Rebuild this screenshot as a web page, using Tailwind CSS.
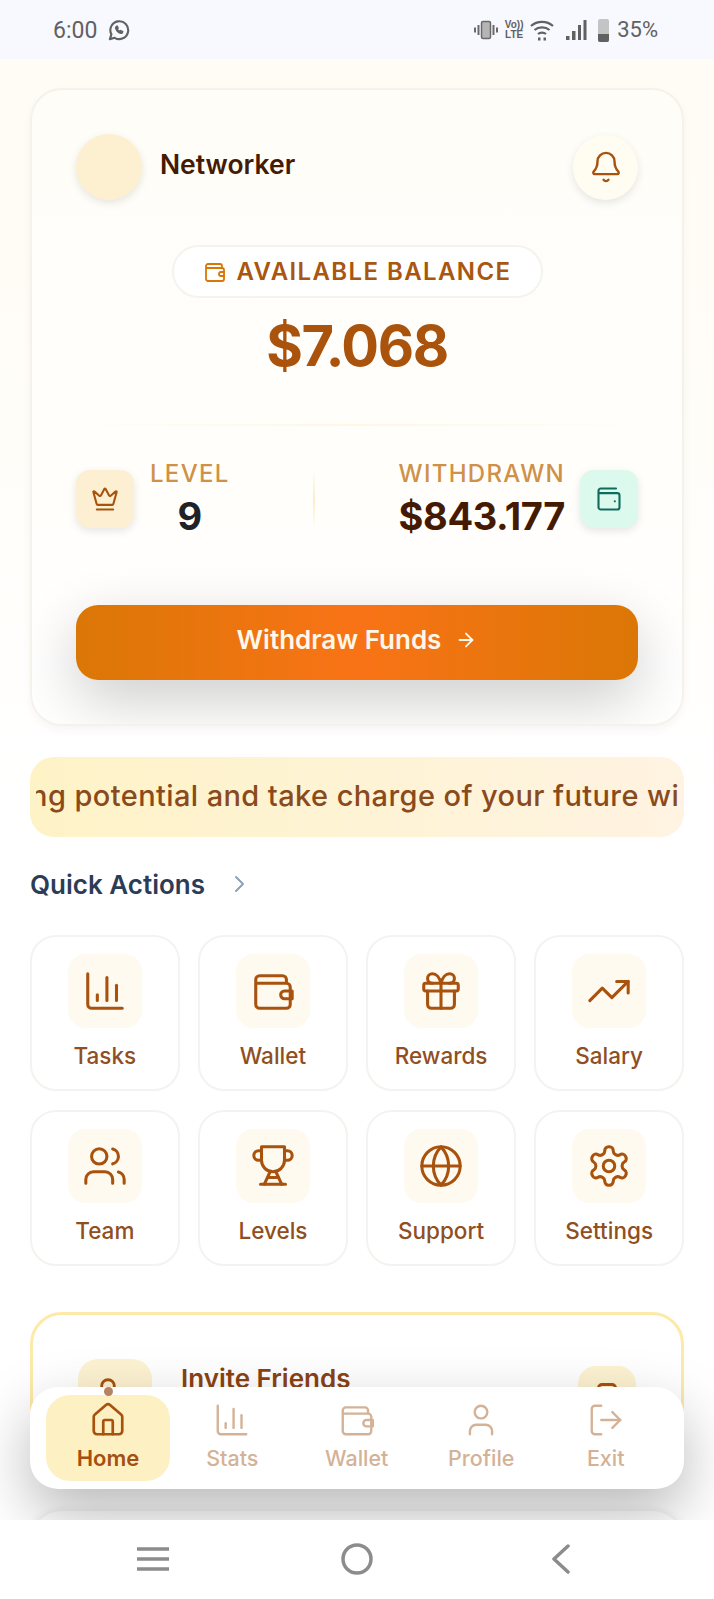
<!DOCTYPE html>
<html lang="en">
<head>
<meta charset="utf-8">
<title>Networker</title>
<script src="https://cdn.jsdelivr.net/npm/@tailwindcss/browser@4"></script>
</head>
<body class="m-0 bg-white">
<div class="relative w-[714px] h-[1599px] overflow-hidden flex flex-col font-['Inter','Noto_Sans',sans-serif] bg-white">

  <!-- status bar -->
  <div class="h-[59px] shrink-0 bg-[#f8f8ff] flex items-center justify-between pl-[53px] pr-[56px] pt-[1px] font-['Roboto',sans-serif] text-[#616161]">
    <div class="flex items-center gap-[10px]">
      <span class="text-[23px] leading-none">6:00</span>
      <svg class="w-[23px] h-[23px]" viewBox="0 0 24 24" fill="none" stroke="#616161" stroke-width="2.2" stroke-linecap="round" stroke-linejoin="round"><path d="M3 21l1.6-5A9.3 9.3 0 1 1 8 19.6z"/><path d="M9 8.500c-.6 3 3.500 7 6.500 6.500l1-1.800-2.300-1.200-1 .9c-1-.4-2-1.400-2.400-2.400l.9-1-1.200-2.300z" stroke-width="1.400" fill="#616161"/></svg>
    </div>
    <div class="flex items-center">
      <svg class="w-[26px] h-[24px]" viewBox="0 0 26 24" fill="none" stroke="#6a6a6a"><rect x="8.500" y="3.500" width="9" height="17" rx="1.500" stroke-width="1.500" fill="#b5b5b5"/><path d="M5.500 7v10M2 9.500v5M20.500 7v10M24 9.500v5" stroke-width="2"/></svg>
      <div class="ml-[6px] w-[18px] flex flex-col items-center text-[10px] leading-[10px] font-bold font-['Liberation_Sans',sans-serif] text-[#616161]"><span>Vo))</span><span>LTE</span></div>
      <svg class="ml-[7px] w-[24px] h-[22px]" viewBox="0 0 24 22" fill="none" stroke="#616161" stroke-width="2.200"><path d="M1 7c6-5.500 16-5.500 22 0M4.500 11c4-3.500 11-3.500 15 0M8 15c2.200-1.800 5.800-1.800 8 0"/><path d="M8 20h2.500M13.500 20H16" stroke-width="3"/></svg>
      <svg class="ml-[11px] w-[22px] h-[22px]" viewBox="0 0 22 22" fill="#616161"><rect x="1" y="17" width="3.500" height="4"/><rect x="7" y="12" width="3.500" height="9"/><rect x="13" y="6" width="3" height="15"/><rect x="18.500" y="1" width="3" height="20"/></svg>
      <div class="ml-[11px] w-[11px] h-[23px] rounded-[2px] bg-[#c4c4c4] flex flex-col justify-end overflow-hidden"><div class="h-[8px] bg-[#616161]"></div></div>
      <span class="ml-[8px] text-[22px] leading-none">35%</span>
    </div>
  </div>

  <!-- page -->
  <div class="relative flex-1 min-h-0 overflow-hidden px-[30px] pt-[29px] bg-[linear-gradient(180deg,#fffcf5_0%,#fffdf8_25%,#ffffff_50%)]">

    <!-- balance card -->
    <div class="h-[638px] rounded-[32px] border-2 border-[#f5f2ec] bg-[linear-gradient(180deg,#fffdf8,#fffefb_60%,#ffffff)] px-[44px] pt-[44px] overflow-hidden shadow-[0_4px_10px_rgba(0,0,0,0.04)]">
      <div class="flex items-center justify-between h-[66px]">
        <div class="flex items-center gap-[18px]">
          <div class="w-[66px] h-[66px] rounded-full bg-[#fdf0d0] shadow-[0_3px_8px_rgba(0,0,0,0.1)]"></div>
          <span class="mb-[4px] text-[26.500px] font-semibold text-[#451a03]">Networker</span>
        </div>
        <div class="w-[65px] h-[65px] rounded-full bg-[#fffcf2] flex items-center justify-center shadow-[0_3px_8px_rgba(0,0,0,0.1)]">
          <svg class="w-[34px] h-[34px]" viewBox="0 0 24 24" fill="none" stroke="#a8520e" stroke-width="1.700" stroke-linecap="round" stroke-linejoin="round"><path d="M10.268 21a2 2 0 0 0 3.464 0"/><path d="M3.262 15.326A1 1 0 0 0 4 17h16a1 1 0 0 0 .74-1.673C19.41 13.956 18 12.499 18 8A6 6 0 0 0 6 8c0 4.499-1.411 5.956-2.738 7.326"/></svg>
        </div>
      </div>

      <div class="mt-[45px] flex justify-center">
        <div class="h-[53px] w-[371px] rounded-full border-2 border-[#f5f3ed] bg-white flex items-center justify-center gap-[10px]">
          <svg class="w-[24px] h-[24px]" viewBox="0 0 24 24" fill="none" stroke="#d97706" stroke-width="1.800" stroke-linecap="round" stroke-linejoin="round"><path d="M4 8h15a2 2 0 0 1 2 2v9a2 2 0 0 1-2 2H5a2 2 0 0 1-2-2V6a2 2 0 0 1 2-2h12a2 2 0 0 1 2 2v2"/><path d="M21 12h-3a2 2 0 0 0 0 4h3"/></svg>
          <span class="text-[24px] leading-none font-semibold tracking-[1.400px] text-[#a9560f]">AVAILABLE BALANCE</span>
        </div>
      </div>

      <div class="mt-[18px] text-center text-[56px] leading-[60px] font-bold tracking-[-1.400px] text-[#a9530c]">$7.068</div>

      <div class="mt-[48px] h-[2px] bg-[linear-gradient(90deg,transparent,#fef7e2,transparent)]"></div>

      <div class="mt-[33px] h-[80px] flex items-center justify-between">
        <div class="flex items-center gap-[16px]">
          <div class="w-[58px] h-[58px] rounded-[14px] bg-[#fdf0d2] flex items-center justify-center shadow-[0_3px_8px_rgba(0,0,0,0.1)]">
            <svg class="w-[28px] h-[28px]" viewBox="0 0 24 24" fill="none" stroke="#a8520e" stroke-width="1.800" stroke-linecap="round" stroke-linejoin="round"><path d="M11.562 3.266a.5.5 0 0 1 .876 0L15.39 8.87a1 1 0 0 0 1.516.294L21.183 5.500a.5.5 0 0 1 .798.519l-2.834 10.246a1 1 0 0 1-.956.734H5.810a1 1 0 0 1-.957-.734L2.020 6.020a.5.5 0 0 1 .798-.519l4.276 3.664a1 1 0 0 0 1.516-.294z"/><path d="M5 21h14"/></svg>
          </div>
          <div class="flex flex-col items-center">
            <span class="text-[24px] leading-[28px] font-medium tracking-[1.300px] text-[#cf9147]">LEVEL</span>
            <span class="mt-[5px] text-[38px] leading-[46px] font-bold text-[#1f2328]">9</span>
          </div>
        </div>
        <div class="w-[2px] h-[60px] bg-[linear-gradient(180deg,transparent,#f9eecb,transparent)]"></div>
        <div class="flex items-center gap-[15px]">
          <div class="flex flex-col items-end">
            <span class="text-[24px] leading-[28px] font-medium tracking-[1.300px] text-[#cf9147]">WITHDRAWN</span>
            <span class="mt-[5px] text-[38px] leading-[46px] font-bold tracking-[-0.400px] text-[#451a03]">$843.177</span>
          </div>
          <div class="w-[58px] h-[58px] rounded-[14px] bg-[#dcf9ee] flex items-center justify-center shadow-[0_3px_8px_rgba(0,0,0,0.1)]">
            <svg class="w-[28px] h-[28px]" viewBox="0 0 24 24" fill="none" stroke="#0f6b5c" stroke-width="1.800" stroke-linecap="round" stroke-linejoin="round"><path d="M4 7h15a2 2 0 0 1 2 2v10a2 2 0 0 1-2 2H5a2 2 0 0 1-2-2V5a2 2 0 0 1 2-2h13"/><path d="M17 14h.01"/></svg>
          </div>
        </div>
      </div>

      <div class="mt-[66px] h-[75px] rounded-[22px] bg-[linear-gradient(90deg,#db7706,#f97316_50%,#db7706)] flex items-center justify-center gap-[14px] pb-[6px] shadow-[0_20px_60px_rgba(0,0,0,0.2)]">
        <span class="text-[26px] font-semibold text-[#fff7ea]">Withdraw Funds</span>
        <svg class="w-[22px] h-[22px]" viewBox="0 0 24 24" fill="none" stroke="#fff7ea" stroke-width="2" stroke-linecap="round" stroke-linejoin="round"><path d="M5 12h14"/><path d="m12 5 7 7-7 7"/></svg>
      </div>
    </div>

    <!-- marquee -->
    <div class="mt-[31px] h-[80px] rounded-[24px] bg-[linear-gradient(90deg,#fef3c7,#fff3e2)] px-[6px] flex items-center">
      <div class="w-full overflow-hidden whitespace-nowrap">
        <div class="ml-[-78px] mb-[3px] text-[29px] leading-[40px] font-medium tracking-[0.400px] text-[#8a4a1c]">earning potential and take charge of your future with us today</div>
      </div>
    </div>

    <!-- quick actions -->
    <div class="mt-[27px] h-[40px] flex items-center gap-[22px]">
      <span class="text-[26px] font-semibold text-[#2d3c56]">Quick Actions</span>
      <svg class="w-[24px] h-[24px]" viewBox="0 0 24 24" fill="none" stroke="#8ca0b8" stroke-width="2" stroke-linecap="round" stroke-linejoin="round"><path d="m9 5 7 7-7 7"/></svg>
    </div>

    <div class="mt-[31px] grid grid-cols-4 gap-x-[18.500px] gap-y-[19.500px]">
      <div class="h-[155.500px] rounded-[26px] border-2 border-[#f5f3f0] bg-white flex flex-col items-center pt-[17px]">
        <div class="w-[74px] h-[74px] rounded-[18px] bg-[#fffaef] flex items-center justify-center">
          <svg class="w-[46px] h-[46px]" viewBox="0 0 24 24" fill="none" stroke="#a8520e" stroke-width="1.600" stroke-linecap="round" stroke-linejoin="round"><path d="M3 3v16a2 2 0 0 0 2 2h16"/><path d="M18 17V9"/><path d="M13 17V5"/><path d="M8 17v-3"/></svg>
        </div>
        <span class="mt-[11px] text-[22.500px] leading-[34px] font-medium text-[#8f4f22]">Tasks</span>
      </div>
      <div class="h-[155.500px] rounded-[26px] border-2 border-[#f5f3f0] bg-white flex flex-col items-center pt-[17px]">
        <div class="w-[74px] h-[74px] rounded-[18px] bg-[#fffaef] flex items-center justify-center">
          <svg class="w-[46px] h-[46px]" viewBox="0 0 24 24" fill="none" stroke="#a8520e" stroke-width="1.600" stroke-linecap="round" stroke-linejoin="round"><path d="M4 8h15a2 2 0 0 1 2 2v9a2 2 0 0 1-2 2H5a2 2 0 0 1-2-2V6a2 2 0 0 1 2-2h12a2 2 0 0 1 2 2v2"/><path d="M22 12h-4a2 2 0 0 0 0 4h4z"/></svg>
        </div>
        <span class="mt-[11px] text-[22.500px] leading-[34px] font-medium text-[#8f4f22]">Wallet</span>
      </div>
      <div class="h-[155.500px] rounded-[26px] border-2 border-[#f5f3f0] bg-white flex flex-col items-center pt-[17px]">
        <div class="w-[74px] h-[74px] rounded-[18px] bg-[#fffaef] flex items-center justify-center">
          <svg class="w-[46px] h-[46px]" viewBox="0 0 24 24" fill="none" stroke="#a8520e" stroke-width="1.600" stroke-linecap="round" stroke-linejoin="round"><rect x="3" y="8" width="18" height="4" rx="1"/><path d="M12 8v13"/><path d="M19 12v7a2 2 0 0 1-2 2H7a2 2 0 0 1-2-2v-7"/><path d="M7.500 8a2.500 2.500 0 0 1 0-5A4.800 8 0 0 1 12 8a4.800 8 0 0 1 4.500-5 2.500 2.500 0 0 1 0 5"/></svg>
        </div>
        <span class="mt-[11px] text-[22.500px] leading-[34px] font-medium text-[#8f4f22]">Rewards</span>
      </div>
      <div class="h-[155.500px] rounded-[26px] border-2 border-[#f5f3f0] bg-white flex flex-col items-center pt-[17px]">
        <div class="w-[74px] h-[74px] rounded-[18px] bg-[#fffaef] flex items-center justify-center">
          <svg class="w-[46px] h-[46px]" viewBox="0 0 24 24" fill="none" stroke="#a8520e" stroke-width="1.600" stroke-linecap="round" stroke-linejoin="round"><path d="M22 7 13.500 15.500 8.500 10.500 2 17"/><path d="M16 7h6v6"/></svg>
        </div>
        <span class="mt-[11px] text-[22.500px] leading-[34px] font-medium text-[#8f4f22]">Salary</span>
      </div>
      <div class="h-[155.500px] rounded-[26px] border-2 border-[#f5f3f0] bg-white flex flex-col items-center pt-[17px]">
        <div class="w-[74px] h-[74px] rounded-[18px] bg-[#fffaef] flex items-center justify-center">
          <svg class="w-[46px] h-[46px]" viewBox="0 0 24 24" fill="none" stroke="#a8520e" stroke-width="1.600" stroke-linecap="round" stroke-linejoin="round"><path d="M16 21v-2a4 4 0 0 0-4-4H6a4 4 0 0 0-4 4v2"/><circle cx="9" cy="7" r="4"/><path d="M22 21v-2a4 4 0 0 0-3-3.870"/><path d="M16 3.130a4 4 0 0 1 0 7.750"/></svg>
        </div>
        <span class="mt-[11px] text-[22.500px] leading-[34px] font-medium text-[#8f4f22]">Team</span>
      </div>
      <div class="h-[155.500px] rounded-[26px] border-2 border-[#f5f3f0] bg-white flex flex-col items-center pt-[17px]">
        <div class="w-[74px] h-[74px] rounded-[18px] bg-[#fffaef] flex items-center justify-center">
          <svg class="w-[46px] h-[46px]" viewBox="0 0 24 24" fill="none" stroke="#a8520e" stroke-width="1.600" stroke-linecap="round" stroke-linejoin="round"><path d="M6 9H4.500a2.500 2.500 0 0 1 0-5H6"/><path d="M18 9h1.500a2.500 2.500 0 0 0 0-5H18"/><path d="M6 2h12v7a6 6 0 0 1-12 0z"/><path d="M10.500 15 7.500 21.500"/><path d="M13.500 15l3 6.500"/><path d="M9.500 18h5"/><path d="M5.500 21.500h13"/></svg>
        </div>
        <span class="mt-[11px] text-[22.500px] leading-[34px] font-medium text-[#8f4f22]">Levels</span>
      </div>
      <div class="h-[155.500px] rounded-[26px] border-2 border-[#f5f3f0] bg-white flex flex-col items-center pt-[17px]">
        <div class="w-[74px] h-[74px] rounded-[18px] bg-[#fffaef] flex items-center justify-center">
          <svg class="w-[46px] h-[46px]" viewBox="0 0 24 24" fill="none" stroke="#a8520e" stroke-width="1.600" stroke-linecap="round" stroke-linejoin="round"><circle cx="12" cy="12" r="10"/><path d="M12 2a14.500 14.500 0 0 0 0 20 14.500 14.500 0 0 0 0-20"/><path d="M2 12h20"/></svg>
        </div>
        <span class="mt-[11px] text-[22.500px] leading-[34px] font-medium text-[#8f4f22]">Support</span>
      </div>
      <div class="h-[155.500px] rounded-[26px] border-2 border-[#f5f3f0] bg-white flex flex-col items-center pt-[17px]">
        <div class="w-[74px] h-[74px] rounded-[18px] bg-[#fffaef] flex items-center justify-center">
          <svg class="w-[46px] h-[46px]" viewBox="0 0 24 24" fill="none" stroke="#a8520e" stroke-width="1.600" stroke-linecap="round" stroke-linejoin="round"><path d="M12.220 2h-.440a2 2 0 0 0-2 2v.180a2 2 0 0 1-1 1.730l-.430.250a2 2 0 0 1-2 0l-.150-.080a2 2 0 0 0-2.730.730l-.220.380a2 2 0 0 0 .730 2.730l.150.100a2 2 0 0 1 1 1.720v.510a2 2 0 0 1-1 1.740l-.150.090a2 2 0 0 0-.730 2.730l.220.380a2 2 0 0 0 2.730.730l.150-.080a2 2 0 0 1 2 0l.430.250a2 2 0 0 1 1 1.730V20a2 2 0 0 0 2 2h.440a2 2 0 0 0 2-2v-.180a2 2 0 0 1 1-1.730l.430-.250a2 2 0 0 1 2 0l.150.080a2 2 0 0 0 2.730-.730l.220-.390a2 2 0 0 0-.730-2.730l-.150-.080a2 2 0 0 1-1-1.740v-.500a2 2 0 0 1 1-1.740l.150-.090a2 2 0 0 0 .730-2.730l-.220-.380a2 2 0 0 0-2.730-.730l-.150.080a2 2 0 0 1-2 0l-.430-.250a2 2 0 0 1-1-1.730V4a2 2 0 0 0-2-2z"/><circle cx="12" cy="12" r="3"/></svg>
        </div>
        <span class="mt-[11px] text-[22.500px] leading-[34px] font-medium text-[#8f4f22]">Settings</span>
      </div>
    </div>

    <!-- invite card -->
    <div class="mt-[46px] h-[168px] rounded-[32px] border-[3px] border-[#fde9a8] bg-white pl-[45px] pr-[45px] pt-[44px] flex items-start justify-between">
      <div class="flex items-start gap-[29px]">
        <div class="w-[74px] h-[74px] rounded-[20px] bg-[#fdf3d2] flex items-center justify-center">
          <svg class="w-[38px] h-[38px] mr-[14px] mb-[4px]" viewBox="0 0 24 24" fill="none" stroke="#a8520e" stroke-width="1.800"><circle cx="12" cy="7" r="4"/><path d="M19 21v-2a4 4 0 0 0-4-4H9a4 4 0 0 0-4 4v2"/></svg>
        </div>
        <span class="text-[26px] leading-[40px] font-semibold text-[#8a4212]">Invite Friends</span>
      </div>
      <div class="mt-[7px] w-[58px] h-[58px] rounded-[18px] bg-[#fdf3d2] flex justify-center pt-[17px]">
        <div class="w-[20px] h-[30px] rounded-[5px] border-[3px] border-[#a8520e]"></div>
      </div>
    </div>
    <!-- next card, mostly hidden -->
    <div class="mt-[31px] h-[120px] rounded-[32px] bg-white shadow-[0_0_10px_rgba(0,0,0,0.1)]"></div>

    <!-- floating navigation -->
    <div class="absolute left-[30px] right-[30px] top-[1328px] h-[102px] rounded-[28px] bg-white shadow-[0_24px_60px_rgba(0,0,0,0.28)] pl-[16px] py-[8px] flex items-stretch">
      <div class="relative w-[124px] rounded-[24px] bg-[#fdf1c4] flex flex-col items-center pt-[6px]">
        <div class="absolute top-[-8px] w-[9px] h-[9px] rounded-full bg-[#b58362]"></div>
        <svg class="w-[38px] h-[38px]" viewBox="0 0 24 24" fill="none" stroke="#a8520e" stroke-width="1.700" stroke-linecap="round" stroke-linejoin="round"><path d="M15 21v-8a1 1 0 0 0-1-1h-4a1 1 0 0 0-1 1v8"/><path d="M3 10a2 2 0 0 1 .709-1.528l7-5.999a2 2 0 0 1 2.582 0l7 5.999A2 2 0 0 1 21 10v9a2 2 0 0 1-2 2H5a2 2 0 0 1-2-2z"/></svg>
        <span class="mt-[4px] text-[22px] leading-[30px] font-semibold text-[#a5500f]">Home</span>
      </div>
      <div class="w-[124.500px] flex flex-col items-center pt-[6px]">
        <svg class="w-[38px] h-[38px]" viewBox="0 0 24 24" fill="none" stroke="#d4b297" stroke-width="1.500" stroke-linecap="round" stroke-linejoin="round"><path d="M3 3v16a2 2 0 0 0 2 2h16"/><path d="M18 17V9"/><path d="M13 17V5"/><path d="M8 17v-3"/></svg>
        <span class="mt-[4px] text-[21.500px] leading-[30px] font-medium text-[#d4b297]">Stats</span>
      </div>
      <div class="w-[124.500px] flex flex-col items-center pt-[6px]">
        <svg class="w-[38px] h-[38px]" viewBox="0 0 24 24" fill="none" stroke="#d4b297" stroke-width="1.500" stroke-linecap="round" stroke-linejoin="round"><path d="M4 8h15a2 2 0 0 1 2 2v9a2 2 0 0 1-2 2H5a2 2 0 0 1-2-2V6a2 2 0 0 1 2-2h12a2 2 0 0 1 2 2v2"/><path d="M22 12h-4a2 2 0 0 0 0 4h4z"/></svg>
        <span class="mt-[4px] text-[21.500px] leading-[30px] font-medium text-[#d4b297]">Wallet</span>
      </div>
      <div class="w-[124.500px] flex flex-col items-center pt-[6px]">
        <svg class="w-[38px] h-[38px]" viewBox="0 0 24 24" fill="none" stroke="#d4b297" stroke-width="1.500" stroke-linecap="round" stroke-linejoin="round"><circle cx="12" cy="7" r="4"/><path d="M19 21v-2a4 4 0 0 0-4-4H9a4 4 0 0 0-4 4v2"/></svg>
        <span class="mt-[4px] text-[21.500px] leading-[30px] font-medium text-[#d4b297]">Profile</span>
      </div>
      <div class="w-[124.500px] flex flex-col items-center pt-[6px]">
        <svg class="w-[38px] h-[38px]" viewBox="0 0 24 24" fill="none" stroke="#d4b297" stroke-width="1.500" stroke-linecap="round" stroke-linejoin="round"><path d="M9 21H5a2 2 0 0 1-2-2V5a2 2 0 0 1 2-2h4"/><path d="m16 17 5-5-5-5"/><path d="M21 12H9"/></svg>
        <span class="mt-[4px] text-[21.500px] leading-[30px] font-medium text-[#d4b297]">Exit</span>
      </div>
    </div>
  </div>

  <!-- android navigation -->
  <div class="h-[79px] shrink-0 bg-white z-10 flex items-center pb-[2px]">
    <div class="w-[306px] flex justify-end pr-[137px]">
      <svg class="w-[32px] h-[26px]" viewBox="0 0 32 26" fill="none" stroke="#8c8c8c" stroke-width="3.500"><path d="M0 3h32M0 13h32M0 23h32"/></svg>
    </div>
    <svg class="ml-[35px] w-[32px] h-[32px]" viewBox="0 0 32 32" fill="none" stroke="#8c8c8c" stroke-width="3.500"><circle cx="16" cy="16" r="14"/></svg>
    <svg class="ml-[177px] w-[22px] h-[30px]" viewBox="0 0 22 30" fill="none" stroke="#8c8c8c" stroke-width="3.500" stroke-linecap="round" stroke-linejoin="round"><path d="M18 2 4 15l14 13"/></svg>
  </div>
</div>
</body>
</html>
